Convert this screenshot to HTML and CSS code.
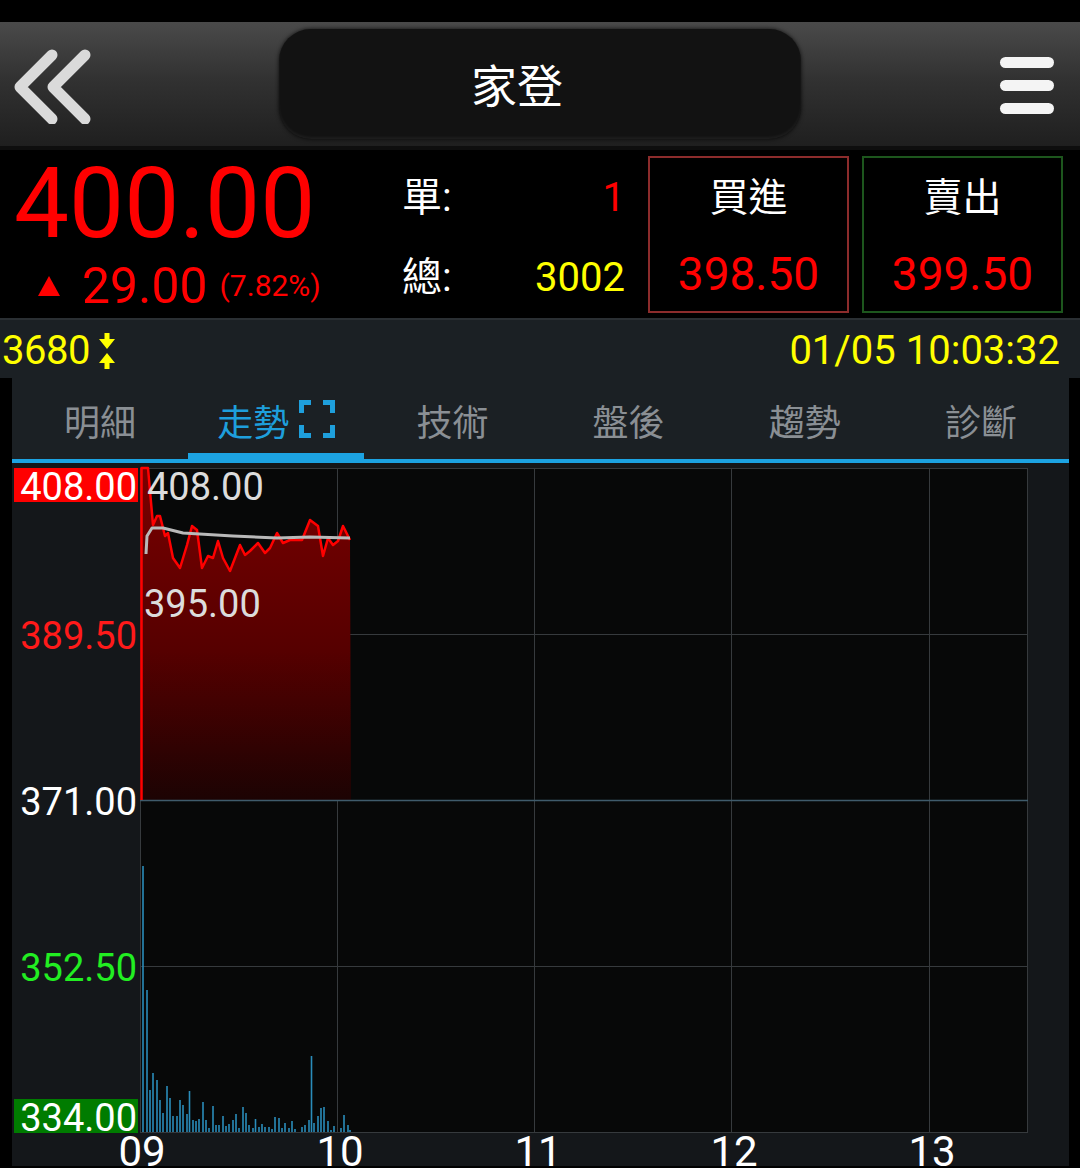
FILE: index.html
```html
<!DOCTYPE html>
<html lang="zh-Hant">

<head>
    <meta charset="UTF-8">
    <meta name="viewport" content="width=device-width, initial-scale=1.0">
    <title>家登 走勢</title>
    <link rel="stylesheet" href="styles.css">
</head>

<body>

    <div class="statusbar"></div>

    <header class="topbar">
        <a class="back" href="#">
            <svg width="80" height="80" viewBox="0 0 80 80">
                <path d="M40 11 L8 43 L40 75 M73 11 L41 43 L73 75" fill="none" stroke="#dadada" stroke-width="11"
                    stroke-linecap="round" stroke-linejoin="round" />
            </svg>
        </a>
        <div class="title">家登</div>
        <a class="menu" href="#">
            <span></span>
            <span></span>
            <span></span>
        </a>
    </header>

    <section class="quote">
        <div class="price">
            <div class="last">400.00</div>
            <div class="change">
                <span class="up-arrow"></span><span class="chg">29.00</span><span class="pct">(7.82%)</span>
            </div>
        </div>

        <div class="vols">
            <div class="vol-row"><span class="lbl">單:</span><span class="red">1</span></div>
            <div class="vol-row"><span class="lbl">總:</span><span class="yellow">3002</span></div>
        </div>

        <div class="order buy">
            <div class="order-label">買進</div>
            <div class="order-price">398.50</div>
        </div>
        <div class="order sell">
            <div class="order-label">賣出</div>
            <div class="order-price">399.50</div>
        </div>
    </section>

    <div class="infobar">
        <span class="code">3680
            <svg class="squeeze" width="18" height="36" viewBox="0 0 18 36">
                <path d="M6.5 0 H11.5 V6 H17 L9 16 L1 6 H6.5 Z M9 20 L17 30 H11.5 V36 H6.5 V30 H1 Z" fill="#ffff00" />
            </svg>
        </span>
        <span class="time">01/05 10:03:32</span>
    </div>

    <main class="panel">
        <nav class="tabs">
            <a class="tab" href="#">明細</a>
            <a class="tab active" href="#">走勢
                <svg class="full" width="36" height="38" viewBox="0 0 36 38">
                    <path d="M2.5 13 V2.5 H12 M24 2.5 H33.5 V13 M33.5 25 V35.5 H24 M12 35.5 H2.5 V25" fill="none"
                        stroke="#1e9fdc" stroke-width="5" />
                </svg>
            </a>
            <a class="tab" href="#">技術</a>
            <a class="tab" href="#">盤後</a>
            <a class="tab" href="#">趨勢</a>
            <a class="tab" href="#">診斷</a>
        </nav>

        <div class="chart">
            <svg width="1057" height="703" viewBox="12 465 1057 703">
                <defs>
                    <linearGradient id="areaFill" gradientUnits="userSpaceOnUse" x1="0" y1="470" x2="0" y2="802">
                        <stop offset="0" stop-color="#7a0000" />
                        <stop offset="0.55" stop-color="#560000" />
                        <stop offset="1" stop-color="#1c0303" />
                    </linearGradient>
                </defs>

                <!-- plot area -->
                <rect x="140" y="470" width="888" height="664" fill="#070808" />

                <!-- grid -->
                <g class="grid">
                    <path d="M140 470.5 H1028 M140 636.5 H1028 M140 968.5 H1028 M140 1134.5 H1028" />
                    <path d="M140.5 470 V1135 M337.5 470 V1135 M534.5 470 V1135 M731.5 470 V1135 M929.5 470 V1135 M1027.5 470 V1135" />
                </g>

                <!-- price area -->
                <path fill="url(#areaFill)" d="M140 802 L141 470 L148 470 L153 527 L157 518 L160 518 L165 538 L168 535 L173 560 L180 570 L187 547 L192 528 L197 532 L202 570 L208 558 L213 560 L218 543 L223 560 L230 573 L240 547 L245 557 L250 553 L258 545 L265 555 L270 550 L277 535 L283 545 L290 542 L302 542 L310 522 L318 528 L323 558 L328 540 L333 547 L338 543 L343 528 L350 542 L351 802 Z" />
                <path d="M140 802.5 H1028" stroke="#3f5b6b" stroke-width="1.5" />
                <path fill="none" stroke="#ff0000" stroke-width="2.5" stroke-linejoin="round" d="M141.5 802 L141.5 470 L148 470 L153 527 L157 518 L160 518 L165 538 L168 535 L173 560 L180 570 L187 547 L192 528 L197 532 L202 570 L208 558 L213 560 L218 543 L223 560 L230 573 L240 547 L245 557 L250 553 L258 545 L265 555 L270 550 L277 535 L283 545 L290 542 L302 542 L310 522 L318 528 L323 558 L328 540 L333 547 L338 543 L343 528 L350 542" />
                <path fill="none" stroke="#b9b9b9" stroke-width="3" stroke-linejoin="round" d="M146 556 L147 538 L152 530 L163 530 L183 535 L233 538 L277 540 L310 539 L350 540" />

                <!-- volume -->
                <path stroke="#2a8cba" stroke-width="1.6" d="M143 1134V868 M147 1134V992 M150 1134V1092 M153 1134V1075 M157 1134V1082 M160 1134V1102 M163 1134V1115 M167 1134V1088 M170 1134V1100 M173 1134V1118 M177 1134V1118 M180 1134V1102 M183 1134V1107 M187 1134V1116 M189.5 1134V1093 M193 1134V1122 M196 1134V1123 M199 1134V1121 M203 1134V1104 M206 1134V1122 M209 1134V1130 M213 1134V1108 M216 1134V1127 M219 1134V1127 M223 1134V1118 M226 1134V1128 M229 1134V1126 M233 1134V1122 M236 1134V1116 M239 1134V1130 M243 1134V1109 M246 1134V1115 M249 1134V1127 M253 1134V1130 M255.5 1134V1121 M259 1134V1129 M262 1134V1126 M265 1134V1129 M269 1134V1129 M272 1134V1131 M275 1134V1119 M279 1134V1120 M282 1134V1130 M285 1134V1125 M289 1134V1130 M292 1134V1123 M295 1134V1131 M302 1134V1129 M305 1134V1127 M309 1134V1122 M311.5 1134V1058 M314 1134V1125 M318 1134V1118 M321 1134V1110 M324 1134V1109 M328 1134V1123 M331 1134V1132 M334 1134V1128 M341 1134V1130 M344 1134V1117 M348 1134V1127 M350 1134V1132" />

                <!-- y axis -->
                <rect x="14" y="470" width="124" height="34" fill="#ff0000" />
                <rect x="14" y="1101" width="124" height="34" fill="#007c00" />
                <g class="axis-y">
                    <text x="137" y="502" fill="#ffffff">408.00</text>
                    <text x="137" y="651" fill="#ff1a1a">389.50</text>
                    <text x="137" y="817" fill="#ffffff">371.00</text>
                    <text x="137" y="983" fill="#22ee22">352.50</text>
                    <text x="137" y="1133" fill="#ffffff">334.00</text>
                </g>

                <g class="marks">
                    <text x="147" y="502">408.00</text>
                    <text x="144" y="619">395.00</text>
                </g>

                <!-- x axis, cut by the screen edge as on the device -->
                <g class="axis-x">
                    <text x="142" y="1168">09</text>
                    <text x="340" y="1168">10</text>
                    <text x="538" y="1168">11</text>
                    <text x="734" y="1168">12</text>
                    <text x="932" y="1168">13</text>
                </g>
            </svg>
        </div>
    </main>

</body>

</html>
```

FILE: styles.css
```css
body {
    margin: 0;
    width: 1080px;
    height: 1168px;
    overflow: hidden;
    background-color: #000;
    font-family: Roboto, "Noto Sans CJK TC", sans-serif;
    color: #fff;
}

a {
    text-decoration: none;
    color: inherit;
}

.statusbar {
    height: 22px;
    background-color: #000;
}

/* top bar */

.topbar {
    height: 124px;
    display: grid;
    grid-template-columns: 1fr 522px 1fr;
    align-items: center;
    background: linear-gradient(#4a4a4a, #323232 45%, #1f1f1f);
    border-bottom: 4px solid #0e0e0e;
}

.back {
    justify-self: start;
    margin-left: 12px;
    display: flex;
}

.title {
    height: 110px;
    box-sizing: border-box;
    padding: 6px 46px 0 0;
    border-radius: 32px;
    background-color: #121212;
    box-shadow: 0 0 4px rgba(0, 0, 0, 0.8), inset 0 -2px 3px rgba(255, 255, 255, 0.05);
    font-size: 46px;
    line-height: 104px;
    text-align: center;
}

.menu {
    justify-self: end;
    margin: 3px 26px 0 0;
    display: flex;
    flex-direction: column;
    gap: 12px;
}

.menu span {
    display: block;
    width: 54px;
    height: 11px;
    border-radius: 6px;
    background-color: #f4f4f4;
}

/* quote */

.quote {
    height: 168px;
    display: flex;
    align-items: flex-start;
    background-color: #000;
}

.price {
    width: 388px;
    padding-left: 14px;
    color: #ff0000;
}

.last {
    margin-top: 5px;
    font-size: 98px;
    line-height: 98px;
}

.change {
    margin-top: 8px;
    font-size: 50px;
    line-height: 50px;
    white-space: nowrap;
}

.up-arrow {
    display: inline-block;
    margin: 0 22px 0 24px;
    border-left: 11px solid transparent;
    border-right: 11px solid transparent;
    border-bottom: 20px solid #ff0000;
    vertical-align: 7px;
}

.pct {
    margin-left: 12px;
    font-size: 30px;
    vertical-align: 7px;
}

.vols {
    width: 223px;
    padding-top: 8px;
    font-size: 40px;
}

.vol-row {
    display: flex;
    justify-content: space-between;
    line-height: 80px;
}

.red {
    color: #ff0000;
}

.yellow {
    color: #ffff00;
}

.order {
    width: 201px;
    height: 157px;
    box-sizing: border-box;
    margin: 6px 0 0 23px;
    text-align: center;
}

.buy {
    border: 2px solid #8c2c2c;
}

.sell {
    margin-left: 13px;
    border: 2px solid #1d561d;
}

.order-label {
    padding-top: 10px;
    font-size: 39px;
    line-height: 60px;
}

.order-price {
    margin-top: 16px;
    font-size: 46px;
    line-height: 60px;
    color: #ff0000;
}

/* info bar */

.infobar {
    height: 60px;
    box-sizing: border-box;
    padding: 3px 20px 0 2px;
    display: flex;
    justify-content: space-between;
    align-items: center;
    background-color: #1b2024;
    border-top: 2px solid #2a2f33;
    font-size: 40px;
    color: #ffff00;
}

.code {
    display: flex;
    align-items: center;
    gap: 8px;
    letter-spacing: -0.5px;
}

/* tabs + chart */

.panel {
    margin: 0 11px 0 12px;
    background-color: #14171a;
}

.tabs {
    display: flex;
    background-color: #1b2024;
    border-bottom: 4px solid #1ca3e2;
}

.tab {
    flex: 1;
    height: 73px;
    padding-top: 8px;
    display: flex;
    justify-content: center;
    align-items: flex-start;
    gap: 10px;
    font-size: 36px;
    line-height: 76px;
    color: #8a8f94;
}

.tab.active {
    color: #1e9fdc;
    box-shadow: inset 0 -6px 0 #1ca3e2;
}

.tab .full {
    margin-top: 14px;
}

.chart svg {
    display: block;
}

.grid path {
    stroke: #363a3d;
    stroke-width: 1;
    fill: none;
}

.axis-y text {
    font-family: Roboto, sans-serif;
    font-size: 38px;
    text-anchor: end;
}

.marks text {
    font-family: Roboto, sans-serif;
    font-size: 38px;
    fill: #dcdcdc;
}

.axis-x text {
    font-family: Roboto, sans-serif;
    font-size: 42px;
    fill: #ffffff;
    text-anchor: middle;
}
```
